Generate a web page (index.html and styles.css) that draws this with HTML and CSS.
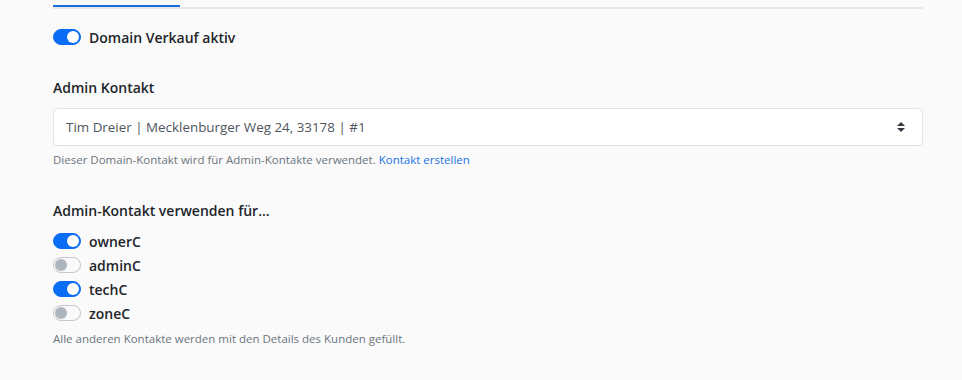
FILE: index.html
```html
<!DOCTYPE HTML>
<html lang="de">
<head>
    <meta name="viewport" content="width=device-width, initial-scale=1">
    <title>Domain Einstellungen</title>
    <link rel="stylesheet" href="styles.css">
</head>
<body>
    <div class="page">
        <div class="tabs">
            <div class="tab active"></div>
        </div>

        <label class="switch-row main-switch">
            <span class="switch on"></span>
            <span class="switch-label">Domain Verkauf aktiv</span>
        </label>

        <div class="field">
            <div class="field-title">Admin Kontakt</div>
            <div class="select">
                <span>Tim Dreier | Mecklenburger Weg 24, 33178 | #1</span>
                <svg class="caret" width="10" height="12" viewBox="0 0 10 12">
                    <path d="M5 1 L9 5 H1 Z M5 11 L9 7 H1 Z" fill="#343a40"/>
                </svg>
            </div>
            <div class="help">Dieser Domain-Kontakt wird für Admin-Kontakte verwendet. <a href="#">Kontakt erstellen</a></div>
        </div>

        <div class="field second">
            <div class="field-title">Admin-Kontakt verwenden für...</div>
            <div class="switch-list">
                <label class="switch-row"><span class="switch on"></span><span class="switch-label">ownerC</span></label>
                <label class="switch-row"><span class="switch"></span><span class="switch-label">adminC</span></label>
                <label class="switch-row"><span class="switch on"></span><span class="switch-label">techC</span></label>
                <label class="switch-row"><span class="switch"></span><span class="switch-label">zoneC</span></label>
            </div>
            <div class="help">Alle anderen Kontakte werden mit den Details des Kunden gefüllt.</div>
        </div>
    </div>
</body>
</html>
```

FILE: styles.css
```css
body {
    margin: 0;
    background: #fafafa;
    font-family: "Source Sans Pro", "Open Sans", sans-serif;
    color: #212529;
}
.page {
    padding: 5px 39px 0 53px;
}
.tabs {
    height: 2px;
    border-bottom: 2px solid #e5e5e5;
    position: relative;
}
.tab.active {
    position: absolute;
    left: 0;
    top: 0;
    width: 127px;
    height: 2px;
    background: #1a6fe0;
}
.switch-row {
    display: flex;
    align-items: center;
    gap: 8px;
    height: 24px;
}
.main-switch {
    margin-top: 16px;
}
.switch {
    width: 26px;
    height: 14px;
    border-radius: 8px;
    border: 1px solid #c2c6cb;
    background: #fafafa;
    position: relative;
    flex: none;
}
.switch::after {
    content: "";
    position: absolute;
    top: 1px;
    left: 1px;
    width: 12px;
    height: 12px;
    border-radius: 50%;
    background: #adb5bd;
}
.switch.on {
    background: #0b6cf5;
    border-color: #0b6cf5;
}
.switch.on::after {
    left: 13px;
    background: #fff;
}
.switch-label {
    font-size: 14px;
    font-weight: 600;
}
.field {
    margin-top: 29px;
}
.field.second {
    margin-top: 34px;
}
.field-title {
    font-size: 14px;
    font-weight: 600;
    margin-bottom: 11px;
}
.second .field-title {
    margin-bottom: 9px;
}
.select {
    display: flex;
    align-items: center;
    justify-content: space-between;
    height: 36px;
    padding: 0 16px 0 12px;
    background: #fff;
    border: 1px solid #e3e3e3;
    border-radius: 4px;
    font-size: 13.4px;
    color: #4f5660;
}
.help {
    margin-top: 6px;
    font-size: 11.5px;
    color: #6c757d;
}
.help a {
    color: #1a73e8;
    text-decoration: none;
}
.switch-list {
    display: flex;
    flex-direction: column;
}
```
